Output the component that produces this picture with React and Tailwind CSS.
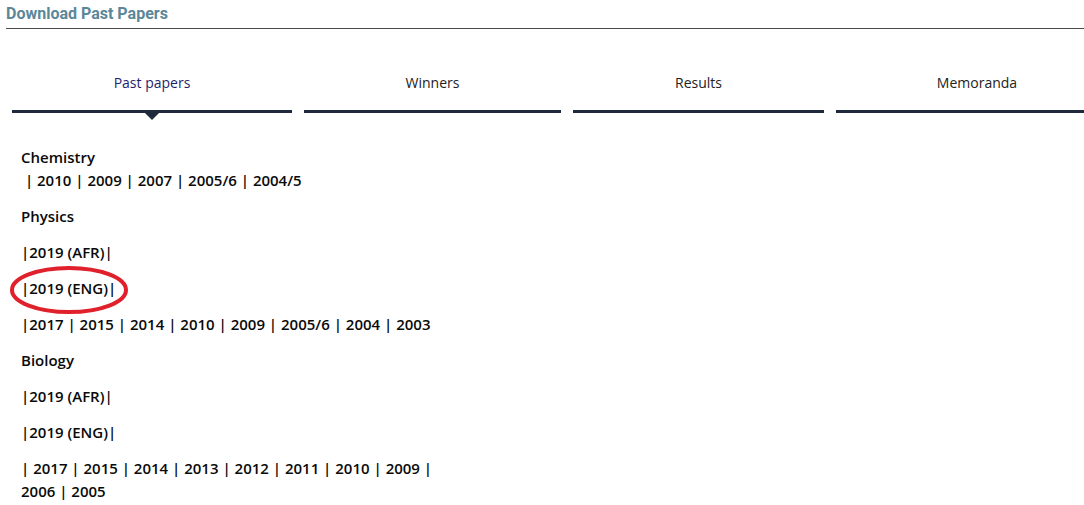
export default function App() {
  const tabs = [
    { label: "Past papers", w: "w-[280px]", active: true },
    { label: "Winners", w: "w-[257px]" },
    { label: "Results", w: "w-[251px]" },
    { label: "Memoranda", w: "w-[282px]" },
  ];
  const p = "mb-[13px] leading-[23px]";
  return (
    <div className="w-[1084px] h-[505px] overflow-hidden bg-white relative" style={{ fontFamily: '"Open Sans", sans-serif' }}>
      <div className="pl-[6px]">
        <div className="h-[28px] pt-[4px] text-[16px] font-bold text-[#5b8799] leading-[20px]" style={{ fontFamily: 'Roboto, sans-serif' }}>
          Download Past Papers
        </div>
        <div className="h-px bg-[#4a4a4a]" />
      </div>
      <div className="flex gap-3 pl-3 pt-[44px]">
        {tabs.map((t) => (
          <div key={t.label} className={`${t.w} shrink-0 flex flex-col items-center relative`}>
            <div className={`text-[14px] leading-[20px] h-[20px] ${t.active ? "text-[#1f1f6b]" : "text-[#222]"}`}>{t.label}</div>
            <div className="mt-[17px] h-[3px] w-full bg-[#1e2a3b]" />
            {t.active && (
              <div className="absolute left-1/2 -translate-x-1/2 top-[40px] w-0 h-0 border-l-[7px] border-r-[7px] border-t-[7px] border-l-transparent border-r-transparent border-t-[#1e2a3b]" />
            )}
          </div>
        ))}
      </div>
      <div className="pl-[21px] pt-[33px] text-[15px] font-semibold text-[#0a0a0a]">
        <p className={p}>Chemistry<br />&nbsp;| 2010 | 2009 | 2007 | 2005/6 | 2004/5</p>
        <p className={p}>Physics</p>
        <p className={p}>|2019 (AFR)|</p>
        <p className={p}>|2019 (ENG)|</p>
        <p className={p}>|2017 | 2015 | 2014 | 2010 | 2009 | 2005/6 | 2004 | 2003</p>
        <p className={p}>Biology</p>
        <p className={p}>|2019 (AFR)|</p>
        <p className={p}>|2019 (ENG)|</p>
        <p className={p}>| 2017 | 2015 | 2014 | 2013 | 2012 | 2011 | 2010 | 2009 |<br />2006 | 2005</p>
      </div>
      <svg className="absolute left-[10px] top-[266px]" width="120" height="50" viewBox="0 0 120 50">
        <ellipse cx="59" cy="24" rx="57" ry="22" fill="none" stroke="#e0202a" strokeWidth="4" />
      </svg>
    </div>
  );
}
